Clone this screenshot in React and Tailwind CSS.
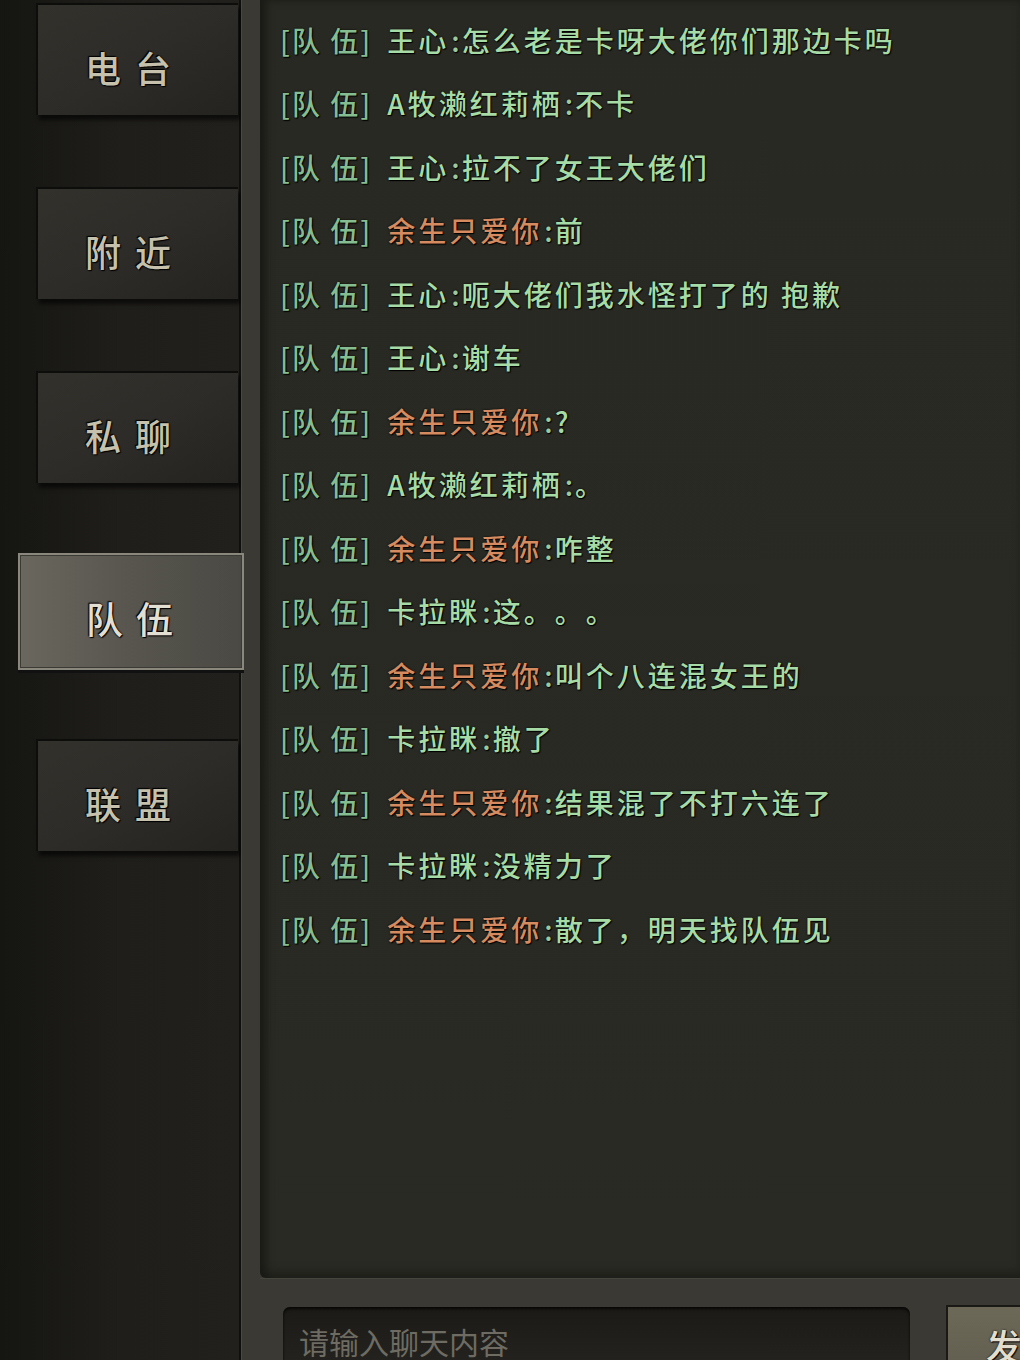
import React from 'react'

const TABS = [
  { label: '电台' },
  { label: '附近' },
  { label: '私聊' },
  { label: '队伍', active: true },
  { label: '联盟' },
]

const ORANGE = '余生只爱你'

const MESSAGES = [
  ['王心', '怎么老是卡呀大佬你们那边卡吗'],
  ['A牧濑红莉栖', '不卡'],
  ['王心', '拉不了女王大佬们'],
  [ORANGE, '前'],
  ['王心', '呃大佬们我水怪打了的 抱歉'],
  ['王心', '谢车'],
  [ORANGE, '?'],
  ['A牧濑红莉栖', '。'],
  [ORANGE, '咋整'],
  ['卡拉眯', '这。。。'],
  [ORANGE, '叫个八连混女王的'],
  ['卡拉眯', '撤了'],
  [ORANGE, '结果混了不打六连了'],
  ['卡拉眯', '没精力了'],
  [ORANGE, '散了，明天找队伍见'],
]

function Tab({ label, active }) {
  if (active) {
    return (
      <div className="relative z-10 -mr-[5px] ml-[18px] -mt-[2px] mb-[-3px] flex h-[117px] items-center justify-center border-2 border-[#8a877c] bg-gradient-to-r from-[#6a675e] via-[#57554e] to-[#4a4943] pt-[14px] shadow-[0_3px_0_#111,inset_0_0_0_1px_#3b3a35]">
        <span className="pl-[12px] pr-[2px] text-[37px] font-medium tracking-[13px] text-[#e2dfd2] [text-shadow:0_0_2px_#000,1px_1px_1px_#000,-1px_-1px_1px_#000]">
          {label}
        </span>
      </div>
    )
  }
  return (
    <div className="ml-[36px] mr-[1px] flex h-[112px] items-center justify-center border-t-2 border-l-2 border-[#0d0d0b] bg-gradient-to-br from-[#32312c] via-[#2d2c28] to-[#242320] pt-[14px] shadow-[3px_5px_4px_rgba(0,0,0,0.6)]">
      <span className="pr-[6px] text-[36px] font-medium tracking-[14px] text-[#c5c1ad] [text-shadow:0_0_2px_#000,1px_1px_1px_#000,-1px_-1px_1px_#000]">
        {label}
      </span>
    </div>
  )
}

function Line({ name, text }) {
  const orange = name === ORANGE
  return (
    <div className="flex h-[63.5px] items-center whitespace-nowrap text-[28px] font-medium leading-none [text-spacing-trim:space-all] [text-shadow:0_0_2px_#000,1px_1px_1px_#000]">
      <span className="mr-[15px] tracking-[2px] text-[#86bd90]">[队 伍]</span>
      <span className={orange ? 'tracking-[3px] text-[#d58b5f]' : 'tracking-[3px] text-[#a7dba6]'}>{name}</span>
      <span className="mx-[2px] text-[#9dc99c]">:</span>
      <span className="tracking-[3px] text-[#a7dba6]">{text}</span>
    </div>
  )
}

export default function App() {
  return (
    <div className="flex h-[1360px] w-[1020px] overflow-hidden bg-[#1f1e1a] font-['Noto_Sans_CJK_SC','Noto_Sans',sans-serif]">
      {/* Sidebar tabs */}
      <aside className="flex w-[241px] shrink-0 flex-col gap-[72px] border-r-2 border-[#0f0f0d] bg-gradient-to-r from-[#151512] via-[#1f1e1a] to-[#21201c] pt-[3px]">
        {TABS.map((t) => (
          <Tab key={t.label} label={t.label} active={t.active} />
        ))}
      </aside>

      {/* Chat panel */}
      <main className="flex min-w-0 flex-1 flex-col border-l border-[#4a4941] bg-[#3a3933] pl-[18px]">
        <div className="flex-1 rounded-bl-[6px] bg-gradient-to-b from-[#292923] to-[#2a2a24] pl-[20px] pt-[8px] shadow-[inset_6px_0_8px_rgba(0,0,0,0.35),inset_0_-8px_10px_rgba(0,0,0,0.15)]">
          {MESSAGES.map(([n, t], i) => (
            <Line key={i} name={n} text={t} />
          ))}
        </div>

        <div className="flex h-[82px] shrink-0 items-start gap-[36px] border-t border-[#45443d] pl-[23px] pt-[28px]">
          <div className="flex h-[80px] w-[627px] shrink-0 items-start rounded-t-[7px] bg-gradient-to-b from-[#1b1a16] to-[#272622] px-[16px] pt-[19px] shadow-[inset_0_2px_3px_rgba(0,0,0,0.8)]">
            <span className="text-[30px] leading-none text-[#6d6b62]">请输入聊天内容</span>
          </div>
          <div className="-mt-[2px] flex h-[80px] w-[140px] shrink-0 items-start border-t-2 border-l-2 border-[#1a1915] bg-gradient-to-b from-[#6c6958] to-[#5f5c4e] pl-[38px] pt-[20px]">
            <span className="text-[36px] font-medium leading-none tracking-[14px] text-[#e2ddcc] [text-shadow:0_0_2px_#000,1px_1px_1px_#000]">
              发送
            </span>
          </div>
        </div>
      </main>
    </div>
  )
}
